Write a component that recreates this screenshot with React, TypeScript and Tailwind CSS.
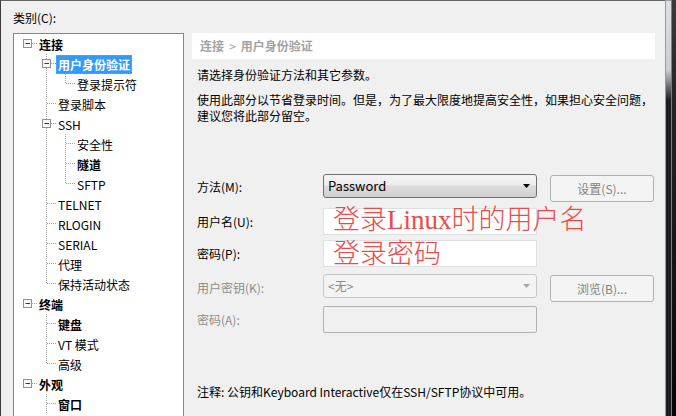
import React from 'react';

interface TreeItem {
  label: string;
  level: number;
  bold?: boolean;
  expander?: boolean;
  selected?: boolean;
  line?: 'full' | 'half';
  rails?: number[];
}

const items: TreeItem[] = [
  { label: '连接', level: 0, bold: true, expander: true },
  { label: '用户身份验证', level: 1, bold: true, expander: true, selected: true, line: 'full' },
  { label: '登录提示符', level: 2, line: 'half', rails: [1] },
  { label: '登录脚本', level: 1, line: 'full' },
  { label: 'SSH', level: 1, line: 'full', expander: true },
  { label: '安全性', level: 2, line: 'full', rails: [1] },
  { label: '隧道', level: 2, line: 'full', bold: true, rails: [1] },
  { label: 'SFTP', level: 2, line: 'half', rails: [1] },
  { label: 'TELNET', level: 1, line: 'full' },
  { label: 'RLOGIN', level: 1, line: 'full' },
  { label: 'SERIAL', level: 1, line: 'full' },
  { label: '代理', level: 1, line: 'full' },
  { label: '保持活动状态', level: 1, line: 'half' },
  { label: '终端', level: 0, bold: true, expander: true },
  { label: '键盘', level: 1, line: 'full', bold: true },
  { label: 'VT 模式', level: 1, line: 'full' },
  { label: '高级', level: 1, line: 'half' },
  { label: '外观', level: 0, bold: true, expander: true },
  { label: '窗口', level: 1, line: 'full', bold: true },
];

// one 19x20 column of the tree's guide lines
function Guide({ vertical, across, box }: { vertical?: 'full' | 'half'; across?: boolean; box?: boolean }) {
  return (
    <svg width="19" height="20" className="block shrink-0">
      {vertical && (
        <line x1="8.5" y1="0" x2="8.5" y2={vertical === 'full' ? 20 : 10} stroke="#a0a0a0" strokeDasharray="1 1" />
      )}
      {across && <line x1={box ? 13 : 9} y1="9.5" x2="19" y2="9.5" stroke="#a0a0a0" strokeDasharray="1 1" />}
      {box && (
        <g>
          <rect x="4.5" y="5.5" width="8" height="8" fill="#f8f8f8" stroke="#919191" />
          <line x1="6.5" y1="9.5" x2="11" y2="9.5" stroke="#1f3b63" />
        </g>
      )}
    </svg>
  );
}

function TreeRow({ item }: { item: TreeItem }) {
  const cols = [];
  for (let c = 0; c < item.level; c++) {
    cols.push(<Guide key={c} vertical={item.rails?.includes(c) ? 'full' : undefined} />);
  }
  cols.push(<Guide key="own" vertical={item.line} across box={item.expander} />);

  return (
    <div className="flex h-[20px] items-start">
      {cols}
      <span
        className={
          'ml-[-1px] mt-[1px] h-[19px] whitespace-nowrap px-[2px] text-[12px] leading-[19px] ' +
          (item.bold ? 'font-bold ' : '') +
          (item.selected
            ? 'bg-[#3399ff] text-white outline-1 outline-dotted -outline-offset-1 outline-[#d9903a]'
            : 'text-black')
        }
      >
        {item.label}
      </span>
    </div>
  );
}

function Select({ value, disabled }: { value: string; disabled?: boolean }) {
  return (
    <div
      className={
        'flex h-[24px] w-[214px] items-center justify-between rounded-[3px] border pl-[4px] pr-[5px] ' +
        (disabled
          ? 'border-[#c5c8cb] bg-[#f4f4f4] text-[#8a8a8a] text-[12px]'
          : 'border-[#707070] bg-[linear-gradient(to_bottom,#f4f4f4_0%,#ececec_45%,#dcdcdc_50%,#d0d0d0_100%)] text-black text-[13px]')
      }
    >
      <span>{value}</span>
      <svg width="8" height="5" viewBox="0 0 8 5">
        <path d="M0 0h7L3.5 4z" fill={disabled ? '#a8a8a8' : '#000'} />
      </svg>
    </div>
  );
}

function DisabledButton({ label }: { label: string }) {
  return (
    <div className="ml-[13px] mt-[1px] flex h-[27px] w-[104px] items-center justify-center rounded-[3px] border border-[#adb2b5] bg-[#f4f4f4] text-[12px] text-[#838383]">
      {label}
    </div>
  );
}

const note = "font-['Liberation_Serif','Noto_Sans_CJK_SC',serif] font-light text-[27px] text-[#f04848] whitespace-nowrap leading-none";

export default function App() {
  return (
    <div className="flex h-[416px] w-[676px] overflow-hidden font-['Noto_Sans_CJK_SC','Noto_Sans',sans-serif]">
      <div className="h-full w-[665px] border-l border-t border-l-[#3c3c3c] border-t-[#646464] bg-[#f0f0f0] pl-[12px]">
        <div className="mt-[9px] h-[16px] text-[12px] leading-[16px] text-black">类别(C):</div>

        <div className="mt-[7px] flex">
          <div className="h-[400px] w-[171px] border border-[#828790] bg-white pl-[5px]">
            {items.map((it) => (
              <TreeRow key={it.label} item={it} />
            ))}
          </div>

          <div className="ml-[8px] w-[463px]">
            <div className="flex h-[26px] items-center bg-white pl-[8px] text-[12px] font-bold text-[#a3a3a3]">
              <span>连接</span>
              <span className="mx-[5px] font-normal">&gt;</span>
              <span>用户身份验证</span>
            </div>

            <div className="pl-[5px] text-[12px] text-black">
              <p className="mt-[8px] leading-[16px]">请选择身份验证方法和其它参数。</p>
              <div className="mt-[9px] whitespace-nowrap">
                <p className="h-[16px] leading-[16px]">使用此部分以节省登录时间。但是，为了最大限度地提高安全性，如果担心安全问题，</p>
                <p className="h-[16px] leading-[16px]">建议您将此部分留空。</p>
              </div>

              <div className="mt-[50px] flex h-[28px]">
                <div className="flex h-[25px] w-[126px] items-center">方法(M):</div>
                <Select value="Password" />
                <DisabledButton label="设置(S)..." />
              </div>

              <div className="mt-[6px] flex h-[27px]">
                <div className="flex h-[27px] w-[126px] items-center">用户名(U):</div>
                <div className="relative h-[27px] w-[214px] border border-[#dcdfe3] bg-white">
                  <span className={note + ' absolute left-[9px] top-[-2px]'}>登录Linux时的用户名</span>
                </div>
              </div>

              <div className="mt-[5px] flex h-[27px]">
                <div className="flex h-[27px] w-[126px] items-center">密码(P):</div>
                <div className="relative h-[27px] w-[214px] border border-[#dcdfe3] bg-white">
                  <span className={note + ' absolute left-[9px] top-[0px]'}>登录密码</span>
                </div>
              </div>

              <div className="mt-[7px] flex h-[28px]">
                <div className="flex h-[27px] w-[126px] items-center text-[#8d8d8d]">用户密钥(K):</div>
                <Select value="<无>" disabled />
                <DisabledButton label="浏览(B)..." />
              </div>

              <div className="mt-[4px] flex h-[27px]">
                <div className="flex h-[27px] w-[126px] items-center text-[#8d8d8d]">密码(A):</div>
                <div className="h-[27px] w-[214px] rounded-[2px] border border-[#adb2b5] bg-[#f0f0f0]" />
              </div>

              <p className="mt-[51px] leading-[16px]">注释: 公钥和Keyboard Interactive仅在SSH/SFTP协议中可用。</p>
            </div>
          </div>
        </div>
      </div>

      <div className="h-full w-[1px] bg-[#9a9a9a]" />
      <div className="h-full w-[5px] bg-[linear-gradient(to_bottom,#5a5a5a_0px,#dde1e6_1px,#c9ced4_70px,#1b1f23_100px,#1b1f23_100%)]" />
      <div className="h-full w-[1px] bg-[#7d7d7d]" />
      <div className="h-full w-[4px] bg-[linear-gradient(to_bottom,#3a3a3a_0px,#262626_90px,#050505_100%)]" />
    </div>
  );
}
